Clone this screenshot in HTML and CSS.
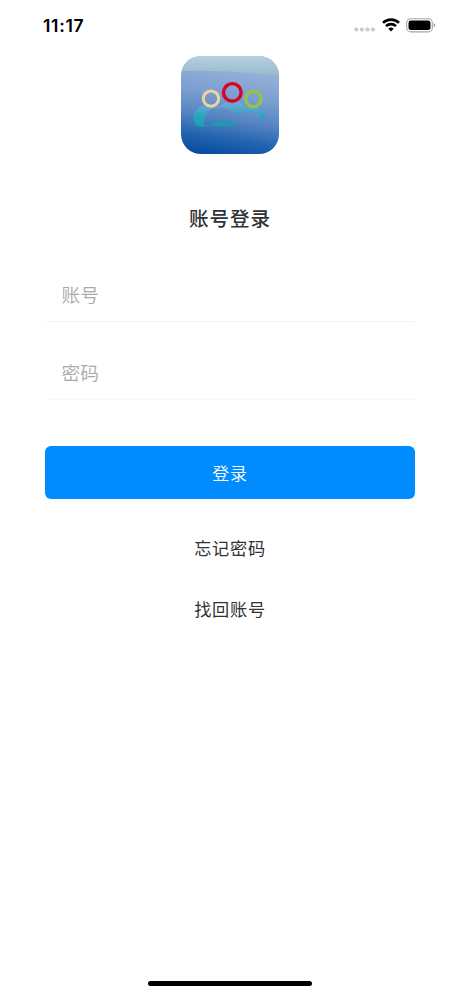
FILE: index.html
```html
<!DOCTYPE html>
<html lang="zh-CN">
<head>
<meta charset="utf-8">
<meta name="viewport" content="width=device-width, initial-scale=1">
<title>账号登录</title>
<link rel="stylesheet" href="styles.css">
</head>
<body>
<div class="screen">
  <header class="status">
    <span class="time">11:17</span>
    <div class="indicators">
      <svg class="signal" width="22" height="5" viewBox="0 0 22 5" fill="#cbcbcb"><circle cx="2.3" cy="2.5" r="2.1"/><circle cx="7.9" cy="2.5" r="2.1"/><circle cx="13.4" cy="2.5" r="2.1"/><circle cx="19" cy="2.5" r="2.1"/></svg>
      <svg class="wifi" width="18" height="14" viewBox="0 0 18 14" fill="none" stroke="#000" stroke-width="2.7"><path d="M1 4.9C5.5.5 12.500.5 17 4.900"/><path d="M4 8.100C6.800 5.400 11.200 5.400 14 8.100"/><path d="M9 13.500 6.300 10.700Q9 8.500 11.700 10.700Z" fill="#000" stroke="none"/></svg>
      <svg class="battery" width="30" height="15" viewBox="0 0 30 15"><rect x=".7" y=".7" width="25.600" height="13.200" rx="4" fill="none" stroke="#a5a5a5" stroke-width="1.100"/><rect x="2.500" y="2.500" width="22" height="9.600" rx="2.400"/><path d="M27.700 5v4.600Q29.300 9 29.300 7.300T27.700 5Z" fill="#a5a5a5"/></svg>
    </div>
  </header>
  <main class="login">
    <svg class="logo" viewBox="0 0 98 98">
      <defs>
        <linearGradient id="sea" x1=".58" y1="0" x2=".42" y2="1"><stop offset=".15" stop-color="#93afd7"/><stop offset=".4" stop-color="#7c9fd0"/><stop offset=".63" stop-color="#5786c3"/><stop offset=".84" stop-color="#2465b0"/><stop offset="1" stop-color="#0b4fa2"/></linearGradient>
        <linearGradient id="sky" x1="0" y1="0" x2="0" y2="1"><stop offset="0" stop-color="#b4d0dd"/><stop offset="1" stop-color="#98bace"/></linearGradient>
        <linearGradient id="wave" x1="0" y1="0" x2="0" y2="1"><stop offset="0" stop-color="#74a9da"/><stop offset=".3" stop-color="#55a5cd"/><stop offset=".55" stop-color="#2ba3bf"/><stop offset="1" stop-color="#13a5b2"/></linearGradient>
        <filter id="soft"><feGaussianBlur stdDeviation=".5"/></filter>
        <clipPath id="tile"><rect width="98" height="98" rx="20"/></clipPath>
      </defs>
      <g clip-path="url(#tile)">
        <rect width="98" height="98" fill="url(#sea)"/>
        <path d="M0 0H98V20Q54 14 0 15Z" fill="url(#sky)"/>
        <g filter="url(#soft)">
          <path d="M14 68C10 61 14 53 21 50C28 48 34 52 40 49C45 45 57 44 63 49C68 53 78 50 82 56Q85.500 61 83.500 64L79.500 62C77 54 66 54 59 58C53 59 50 52 42 52C31 50 25 56 24 62Q21 67 25 70Q18 72 14 68Z" fill="url(#wave)"/>
          <path d="M28 70Q38 64 53 66Q57 67.500 52 69Q43 71 28 70Z" fill="#139fb1"/>
        </g>
        <g fill="none">
          <circle cx="30" cy="42.600" r="7.700" stroke="#f3d0a0" stroke-width="3"/>
          <circle cx="72.400" cy="43" r="7.700" stroke="#92c541" stroke-width="3.200"/>
          <circle cx="51.300" cy="36.400" r="8.800" stroke="#d90420" stroke-width="3.400"/>
        </g>
      </g>
    </svg>
    <h1 class="title">账号登录</h1>
    <form class="form">
      <div class="field">账号</div>
      <div class="field password">密码</div>
      <button class="submit" type="button">登录</button>
    </form>
    <nav class="links"><a>忘记密码</a><a>找回账号</a></nav>
  </main>
  <div class="home-bar"></div>
</div>
</body>
</html>
```
FILE: styles.css
```css
* { box-sizing: border-box; }

body {
  margin: 0;
  background: #fff;
  color: #2f3236;
  font-family: "Noto Sans CJK SC", sans-serif;
}

.screen {
  height: 996px;
  display: flex;
  flex-direction: column;
}

.status {
  height: 56px;
  padding: 15px 24px 0 43px;
  display: flex;
  justify-content: space-between;
  align-items: flex-start;
}

.time {
  font: 600 17.5px/22px Inter, sans-serif;
  letter-spacing: .7px;
  color: #000;
}

.indicators {
  display: flex;
  align-items: flex-start;
}

.signal { margin: 12px 6px 0 0; }
.wifi { margin: 3px 6px 0 0; }
.battery { margin: 3px 0 0; }

.login {
  flex: 1;
  padding: 0 45px;
  display: flex;
  flex-direction: column;
  align-items: center;
}

.logo {
  width: 98px;
  height: 98px;
}

.title {
  margin: 49px 0 0;
  font-size: 19.6px;
  letter-spacing: .9px;
  line-height: 30px;
  font-weight: 500;
}

.form {
  width: 100%;
  margin-top: 34px;
}

.field {
  height: 55px;
  padding: 13px 16.5px 0;
  border-bottom: 1px solid #f3f3f3;
  font-size: 18.7px;
  line-height: 28px;
  font-weight: 350;
  color: #a9a9a9;
}

.password {
  margin-top: 23px;
  border-color: #f7f7f7;
}

.submit {
  display: block;
  width: 100%;
  height: 53px;
  margin-top: 46px;
  padding: 0;
  border: 0;
  border-radius: 6px;
  background: #008cff;
  color: #fff;
  font: 350 17px/53px "Noto Sans CJK SC", sans-serif;
  letter-spacing: .7px;
}

.links {
  margin-top: 36px;
  display: flex;
  flex-direction: column;
  gap: 35px;
  font-size: 17.2px;
  letter-spacing: .7px;
  line-height: 26px;
}

.home-bar {
  width: 164px;
  height: 5px;
  margin: 0 auto 10px;
  border-radius: 3px;
  background: #000;
}
```
